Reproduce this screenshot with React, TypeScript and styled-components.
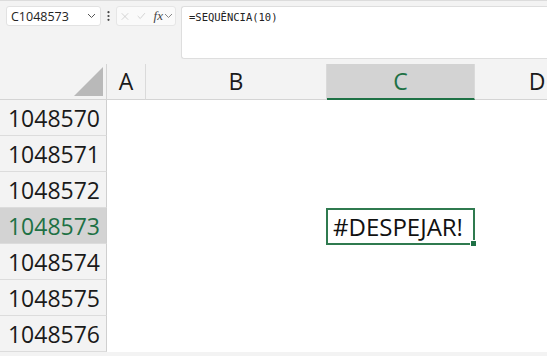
import React from "react";
import styled, { createGlobalStyle } from "styled-components";

const GREEN = "#1e7145";

const GlobalStyle = createGlobalStyle`
  html, body {
    margin: 0;
    padding: 0;
    background: #f3f3f3;
    overflow: hidden;
  }
  body {
    font-family: "Open Sans", "Noto Sans", sans-serif;
    color: #1f1f1f;
  }
`;

const Window = styled.div`
  width: 547px;
  height: 356px;
  overflow: hidden;
  background: #f3f3f3;
  border-top: 1px solid #dcdcdc;
  box-sizing: border-box;
`;

const FormulaBar = styled.div`
  display: flex;
  align-items: flex-start;
  height: 63px;
  padding: 5px 0 0 6px;
  box-sizing: border-box;
`;

const NameBox = styled.div`
  width: 95px;
  height: 20px;
  box-sizing: border-box;
  background: #fff;
  border: 1px solid #e2e2e2;
  border-radius: 3px;
  display: flex;
  align-items: center;
  justify-content: space-between;
  padding: 0 4px 0 4px;
  font-size: 12.5px;
  color: #222;
`;

const Dots = styled.div`
  width: 15px;
  height: 20px;
  display: flex;
  align-items: center;
  justify-content: center;
`;

const FxBox = styled.div`
  width: 60px;
  height: 20px;
  box-sizing: border-box;
  background: #fafafa;
  border: 1px solid #e6e6e6;
  border-radius: 3px;
  display: flex;
  align-items: center;
  gap: 8px;
  padding: 0 2px 0 4px;
`;

const Fx = styled.span`
  font-family: "Liberation Serif", "DejaVu Serif", serif;
  font-style: italic;
  font-size: 13px;
  color: #444;
  display: flex;
  align-items: center;
  gap: 1px;
`;

const FormulaInput = styled.div`
  flex: 1;
  margin-left: 5px;
  height: 53px;
  box-sizing: border-box;
  background: #fff;
  border: 1px solid #dedede;
  border-right: none;
  border-radius: 3px 0 0 3px;
  padding: 4px 7px;
  font-family: "DejaVu Sans Mono", "Liberation Mono", monospace;
  font-size: 10.5px;
  color: #222;
`;

const Sheet = styled.div`
  display: grid;
  grid-template-columns: 107px 39px 181px 148px 125px;
  grid-auto-rows: 36px;
  background: #fff;
`;

const Corner = styled.div`
  background: #f3f3f3;
  border-right: 1px solid #d4d4d4;
  border-bottom: 1px solid #d4d4d4;
  display: flex;
  align-items: flex-end;
  justify-content: flex-end;
  padding: 0 3px 3px 0;
`;

const ColHeader = styled.div<{ $active?: boolean }>`
  background: ${({ $active }) => ($active ? "#d3d3d3" : "#f3f3f3")};
  border-right: 1px solid #dadada;
  border-bottom: ${({ $active }) => ($active ? `2px solid ${GREEN}` : "1px solid #d4d4d4")};
  box-sizing: border-box;
  display: flex;
  align-items: center;
  justify-content: center;
  font-size: 23px;
  color: ${({ $active }) => ($active ? GREEN : "#1a1a1a")};
  padding-bottom: 1px;
`;

const RowHeader = styled.div<{ $active?: boolean }>`
  background: ${({ $active }) => ($active ? "#d3d3d3" : "#f3f3f3")};
  border-right: 1px solid #cfcfcf;
  border-bottom: 1px solid #dcdcdc;
  display: flex;
  align-items: center;
  justify-content: flex-end;
  padding-right: 6px;
  font-size: 23px;
  color: ${({ $active }) => ($active ? GREEN : "#1a1a1a")};
`;

const Cell = styled.div`
  background: #fff;
  position: relative;
`;

const SelectedCell = styled.div`
  position: absolute;
  inset: 0 0 -1px -1px;
  border: 2px solid #2f7a4f;
  display: flex;
  align-items: center;
  padding-left: 5px;
  font-size: 24px;
  color: #111;
  z-index: 1;
`;

const FillHandle = styled.span`
  position: absolute;
  right: -4px;
  bottom: -4px;
  width: 5px;
  height: 5px;
  background: ${GREEN};
  border: 1px solid #fff;
`;

const Chevron = ({ color = "#666" }: { color?: string }) => (
  <svg width="9" height="6" viewBox="0 0 9 6">
    <path d="M1 1 L4.5 4.5 L8 1" fill="none" stroke={color} strokeWidth="1" />
  </svg>
);

const columns = ["A", "B", "C", "D"];
const rows = [1048570, 1048571, 1048572, 1048573, 1048574, 1048575, 1048576];

export default function App() {
  return (
    <Window>
      <GlobalStyle />
      <FormulaBar>
        <NameBox>
          <span>C1048573</span>
          <Chevron color="#555" />
        </NameBox>
        <Dots>
          <svg width="3" height="10" viewBox="0 0 3 10">
            <circle cx="1.5" cy="1.2" r="1.1" fill="#444" />
            <circle cx="1.5" cy="5" r="1.1" fill="#444" />
            <circle cx="1.5" cy="8.8" r="1.1" fill="#444" />
          </svg>
        </Dots>
        <FxBox>
          <svg width="11" height="11" viewBox="0 0 11 11">
            <path d="M1 1 L10 10 M10 1 L1 10" stroke="#c4c4c4" strokeWidth="1" />
          </svg>
          <svg width="12" height="10" viewBox="0 0 12 10">
            <path d="M1 5 L4.5 8.5 L11 1" fill="none" stroke="#c4c4c4" strokeWidth="1" />
          </svg>
          <Fx>
            fx
            <Chevron color="#888" />
          </Fx>
        </FxBox>
        <FormulaInput>=SEQUÊNCIA(10)</FormulaInput>
      </FormulaBar>

      <Sheet>
        <Corner>
          <svg width="29" height="29" viewBox="0 0 29 29">
            <path d="M29 0 L29 29 L0 29 Z" fill="#b9b9b9" />
          </svg>
        </Corner>
        {columns.map((c) => (
          <ColHeader key={c} $active={c === "C"}>
            {c}
          </ColHeader>
        ))}
        {rows.map((r) => (
          <React.Fragment key={r}>
            <RowHeader $active={r === 1048573}>{r}</RowHeader>
            {columns.map((c) => (
              <Cell key={c}>
                {c === "C" && r === 1048573 && (
                  <SelectedCell>
                    #DESPEJAR!
                    <FillHandle />
                  </SelectedCell>
                )}
              </Cell>
            ))}
          </React.Fragment>
        ))}
      </Sheet>
    </Window>
  );
}
